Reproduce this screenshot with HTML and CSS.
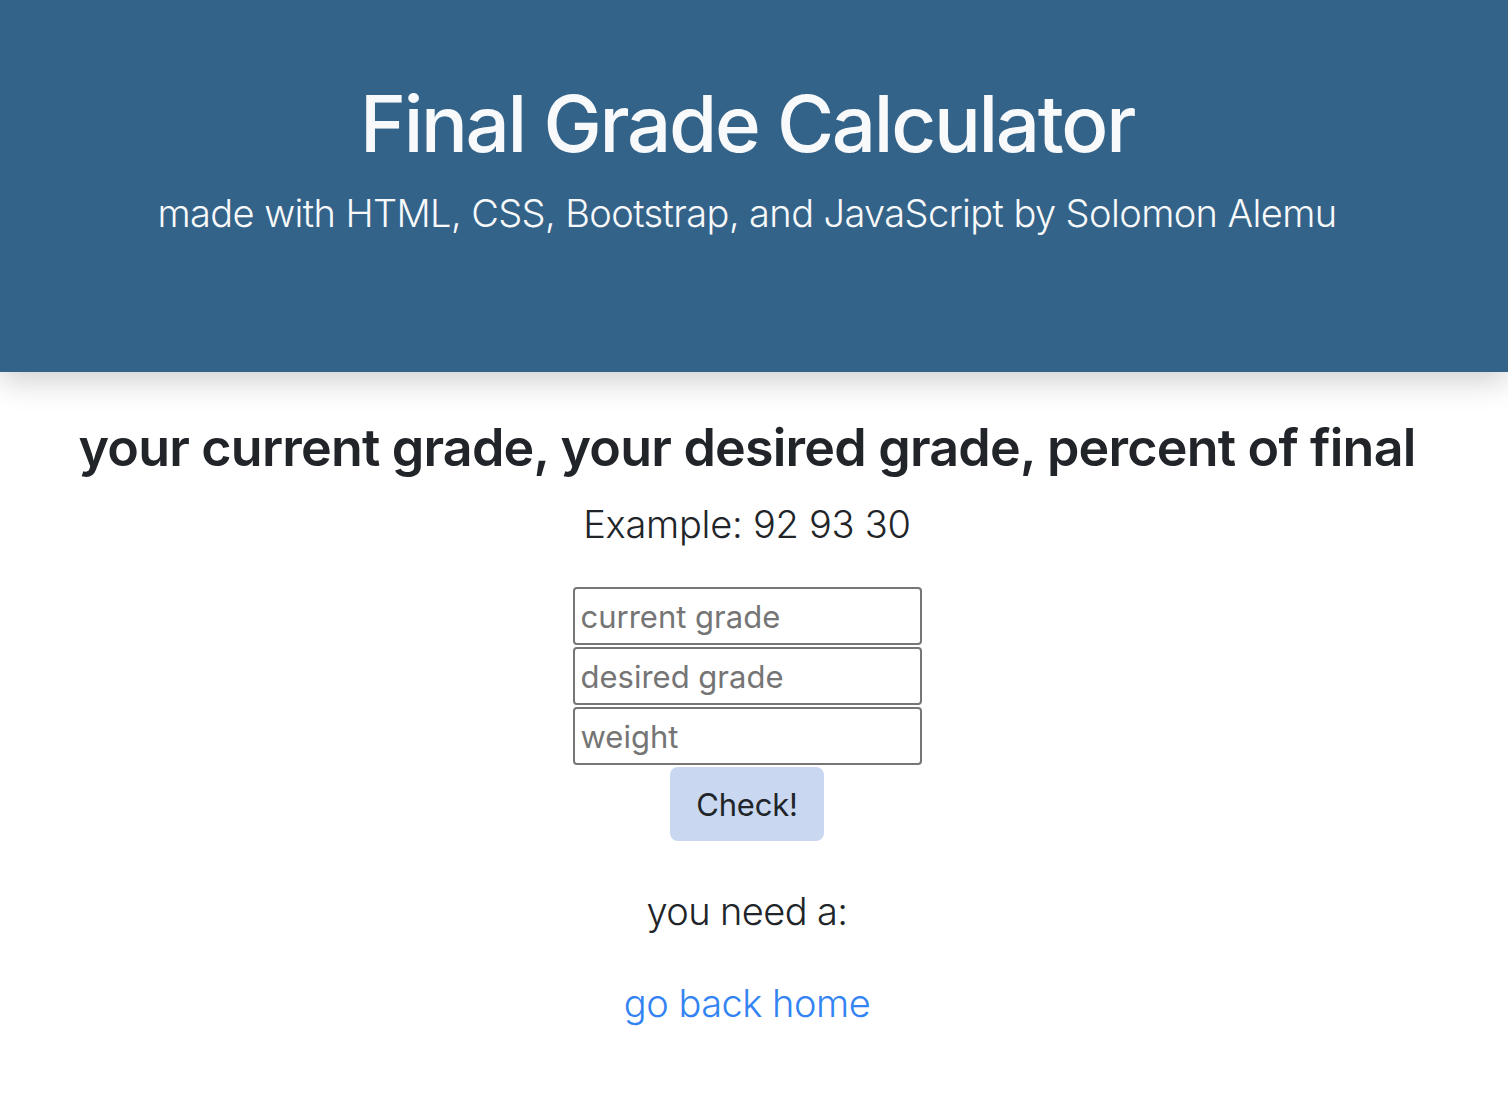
FILE: index.html
```html
<!DOCTYPE html>
<html lang="en">
<head>
<meta charset="utf-8">
<title>Final Grade Calculator</title>
<link rel="stylesheet" href="styles.css">
</head>
<body>
<header class="hero">
  <h1 class="hero-title">Final Grade Calculator</h1>
  <p class="hero-lead">made with HTML, CSS, Bootstrap, and JavaScript by Solomon Alemu</p>
</header>
<main class="content">
  <h2 class="prompt">your current grade, your desired grade, percent of final</h2>
  <p class="example">Example: 92 93 30</p>
  <form class="grade-form">
    <input class="field" type="text" placeholder="current grade">
    <input class="field" type="text" placeholder="desired grade">
    <input class="field" type="text" placeholder="weight">
    <button class="check-btn" type="button">Check!</button>
  </form>
  <p class="result">you need a:</p>
  <a class="home-link" href="#">go back home</a>
</main>
</body>
</html>
```
FILE: styles.css
```css
* { box-sizing: border-box; }
html, body { margin: 0; padding: 0; }
body {
  font-family: Inter, "Noto Sans", "Liberation Sans", sans-serif;
  color: #212529;
  background: #fff;
}
.hero {
  background: #346389;
  height: 372px;
  padding: 78px 14px 0 0;
  text-align: center;
  color: #f8f9fa;
  box-shadow: 0 8px 30px rgba(0,0,0,0.2);
  position: relative;
}
.hero-title {
  margin: 0;
  font-size: 78px;
  font-weight: 500;
  line-height: 92px;
  letter-spacing: -2.3px;
}
.hero-lead {
  margin: 19px 0 0;
  font-size: 38px;
  font-weight: 300;
  line-height: 48px;
  letter-spacing: -0.6px;
}
.content {
  text-align: center;
  padding: 44px 14px 0 0;
}
.prompt {
  margin: 0;
  font-size: 52px;
  font-weight: 600;
  line-height: 64px;
  letter-spacing: -0.8px;
}
.example {
  margin: 20px 0 0;
  font-size: 38px;
  font-weight: 300;
  line-height: 48px;
  letter-spacing: -0.25px;
}
.grade-form {
  display: flex;
  flex-direction: column;
  align-items: center;
  gap: 2px;
  margin-top: 39px;
}
.field {
  width: 349px;
  height: 58px;
  border: 2px solid #767676;
  border-radius: 4px;
  padding: 0 6px;
  font-family: inherit;
  font-size: 31px;
  color: #212529;
  background: #fff;
}
.field::placeholder { color: #757575; opacity: 1; letter-spacing: 0; }
.check-btn {
  width: 154px;
  height: 74px;
  border: none;
  border-radius: 8px;
  background: #c9d7f0;
  color: #212529;
  font-family: inherit;
  font-size: 31px;
  font-weight: 400;
  letter-spacing: -0.2px;
  cursor: pointer;
}
.result {
  margin: 46px 0 0;
  font-size: 38px;
  font-weight: 300;
  line-height: 48px;
  letter-spacing: -0.6px;
}
.home-link {
  display: inline-block;
  margin-top: 44px;
  font-size: 38px;
  font-weight: 300;
  line-height: 48px;
  letter-spacing: -0.5px;
  color: #3383f3;
  text-decoration: none;
}
```
